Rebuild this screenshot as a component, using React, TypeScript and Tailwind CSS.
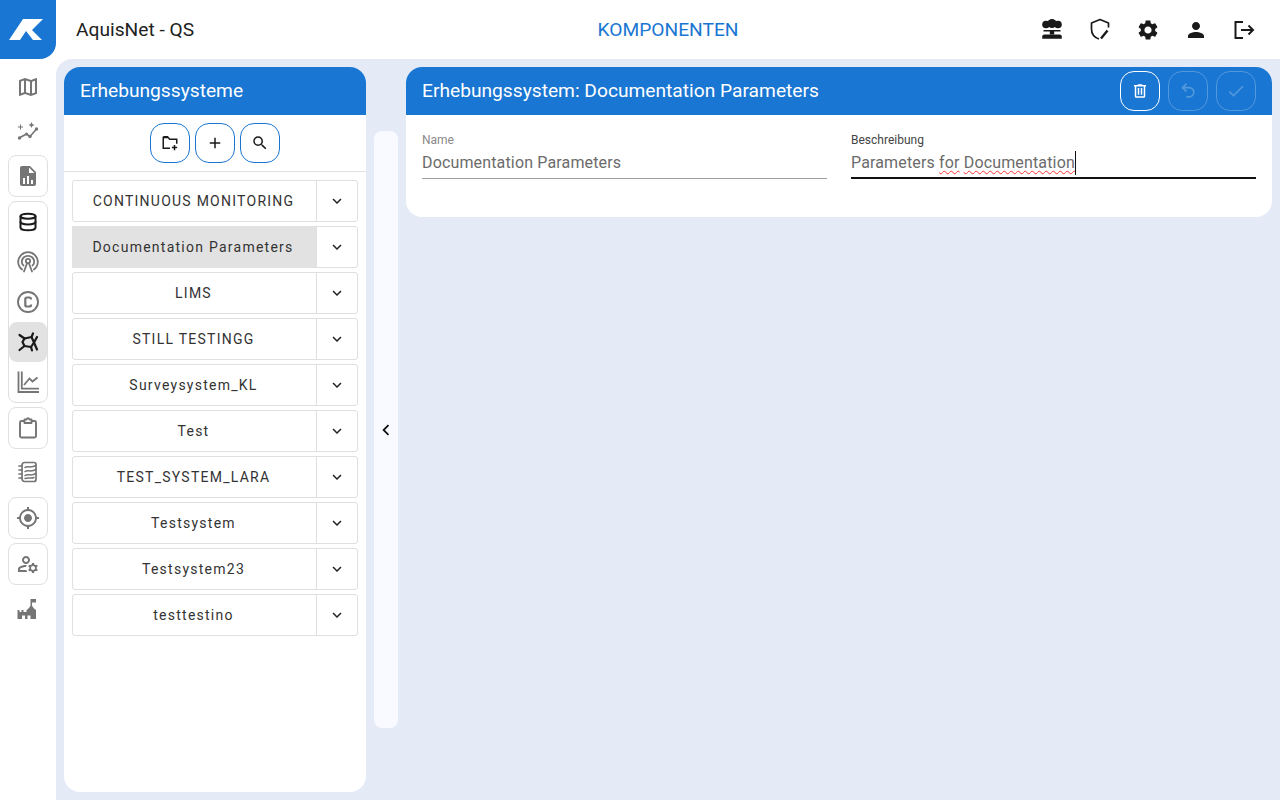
import React from "react";
import {
  MdOutlineMap,
  MdGpsFixed,
  MdOutlineManageAccounts,
  MdSettings,
  MdPerson,
  MdAdd,
  MdSearch,
  MdExpandMore,
  MdChevronLeft,
  MdCheck,
} from "react-icons/md";
import { Database } from "lucide-react";

const systems = [
  "CONTINUOUS MONITORING",
  "Documentation Parameters",
  "LIMS",
  "STILL TESTINGG",
  "Surveysystem_KL",
  "Test",
  "TEST_SYSTEM_LARA",
  "Testsystem",
  "Testsystem23",
  "testtestino",
];

const Logo = () => (
  <svg width="56" height="59" viewBox="0 0 56 59">
    <polygon points="23,19 43,19 32,30 42,40 33,40 26,31 20,40 9,40" fill="#fff" />
  </svg>
);

const SparkGraph = () => (
  <svg width="24" height="24" viewBox="0 0 24 24" fill="currentColor" stroke="none">
    <path d="M4 18.5L10.5 15L14 17.5L20.5 10" fill="none" stroke="currentColor" strokeWidth="1.6" />
    <circle cx="3.5" cy="19" r="1.7" />
    <circle cx="10.5" cy="15" r="1.5" />
    <circle cx="14" cy="17.5" r="1.7" />
    <circle cx="20.5" cy="10" r="1.7" />
    <path d="M4 5.5H5V7.5H7V8.5H5V10.5H4V8.5H2V7.5H4V5.5Z" />
    <path d="M15.5 3L16.4 5.1L18.5 6L16.4 6.9L15.5 9L14.6 6.9L12.5 6L14.6 5.1L15.5 3Z" />
  </svg>
);

const FileChart = () => (
  <svg width="24" height="24" viewBox="0 0 24 24" fill="currentColor">
    <path d="M13,9H18.5L13,3.5V9M6,2H14L20,8V20A2,2 0 0,1 18,22H6C4.89,22 4,21.1 4,20V4C4,2.89 4.89,2 6,2M7,20H9V14H7V20M11,20H13V12H11V20M15,20H17V16H15V20Z" />
  </svg>
);

const Antenna = () => (
  <svg width="24" height="24" viewBox="0 0 24 24" fill="none" stroke="currentColor" strokeWidth="1.8" strokeLinecap="round">
    <path d="M6 19.5C3.5 17.5 2.2 15 2.2 12C2.2 6.6 6.6 2.2 12 2.2C17.4 2.2 21.8 6.6 21.8 12C21.8 15 20.5 17.5 18 19.5" />
    <path d="M7.5 15.5C6.4 14.6 5.8 13.3 5.8 11.8C5.8 8.4 8.6 5.8 12 5.8C15.4 5.8 18.2 8.4 18.2 11.8C18.2 13.3 17.6 14.6 16.5 15.5" />
    <circle cx="12" cy="11" r="2.2" />
    <path d="M11 13.5L8 21.5M13 13.5L16 21.5" />
  </svg>
);

const CopyrightIcon = () => (
  <svg width="24" height="24" viewBox="0 0 24 24" fill="none" stroke="currentColor" strokeWidth="1.9">
    <circle cx="12" cy="12" r="10" />
    <path d="M15 9.5V9C15 8 14.3 7.5 13.3 7.5H11C10 7.5 9.3 8 9.3 9V15C9.3 16 10 16.5 11 16.5H13.3C14.3 16.5 15 16 15 15V14.5" strokeWidth="2.2" />
  </svg>
);

const Molecule = () => (
  <svg width="24" height="24" viewBox="0 0 24 24" fill="none" stroke="currentColor" strokeWidth="2.2" strokeLinecap="round" strokeLinejoin="round">
    <path d="M8.5 8.5L15.5 7L18 12.5L15 17L8.5 16L6.5 12Z" />
    <path d="M8.5 8.5L3.5 5M15.5 7L17 3.5M18 12.5L21 7M18 12.5L21 19.5M15 17L16 20.5M8.5 16L3.5 20" />
  </svg>
);

const DoubleAxisChart = () => (
  <svg width="24" height="24" viewBox="0 0 24 24" fill="none" stroke="currentColor" strokeWidth="1.8">
    <path d="M2.5 1.5V22H23" />
    <path d="M5.8 1.5V18.7H23" />
    <path d="M8 15L13.5 8.5L16.5 11.5L21.5 7.5" strokeWidth="1.8" />
  </svg>
);

const Clipboard = () => (
  <svg width="24" height="24" viewBox="0 0 24 24" fill="none" stroke="currentColor" strokeWidth="1.9" strokeLinejoin="round">
    <path d="M8.5 5H5.5C4.4 5 4 5.5 4 6.5V20C4 21 4.5 21.5 5.5 21.5H18.5C19.5 21.5 20 21 20 20V6.5C20 5.5 19.5 5 18.5 5H15.5" />
    <path d="M8.5 3.5H10.5C10.8 2.6 11.3 2.2 12 2.2C12.7 2.2 13.2 2.6 13.5 3.5H15.5V7H8.5V3.5Z" />
  </svg>
);

const Notebook = () => (
  <svg width="24" height="24" viewBox="0 0 24 24" fill="none" stroke="currentColor" strokeWidth="1.7" strokeLinecap="round" strokeLinejoin="round">
    <path d="M6 5.5C6 3.5 7 2.5 8.5 2.5H18C19.5 2.5 20 3.5 20 4.5V19.5C20 20.5 19.5 21.5 18 21.5H8.5C7 21.5 6 20.5 6 18.5V5.5Z" />
    <path d="M3 6H6M3 10H6M3 14H6M3 18H6" />
    <path d="M9 7.5C11 5.5 14 8.5 20 5.5M9 11.5C12 9.5 15 12.5 20 9.5M9 15.5C12 13.5 15 16.5 20 13.5M9 18.5C12 17 15 19 18 17.5" strokeWidth="1.5" />
  </svg>
);

const Castle = () => (
  <svg width="24" height="24" viewBox="0 0 24 24" fill="currentColor">
    <path d="M1.5 22V13H3.5V15H5.5V13H7.5V15H10.5V13C12 12 13.5 10.5 14.5 8.5V2H20V5.5H16V8.5C17 10.5 18.5 12 20 13V22H14.5V18.5H11.5V22H9V18.5H6V22H1.5Z" />
  </svg>
);

const MushroomCloud = () => (
  <svg width="24" height="24" viewBox="0 0 24 24" fill="currentColor">
    <circle cx="6" cy="6.5" r="3.8" />
    <circle cx="12" cy="5.5" r="4.5" />
    <circle cx="18" cy="6.5" r="3.8" />
    <path d="M3.5 12H20.5V13.6H14.2V16.5H9.8V13.6H3.5V12Z" />
    <path d="M4.5 16.5H19.5C21.2 16.5 21.8 17.5 21.8 19V20.8H2.2V19C2.2 17.5 2.8 16.5 4.5 16.5Z" />
  </svg>
);

const ShieldEdit = () => (
  <svg width="24" height="24" viewBox="0 0 24 24" fill="none" stroke="currentColor" strokeWidth="1.7" strokeLinejoin="round">
    <path d="M20.5 9.5V5L12 1.5L3.5 5V11C3.5 15.5 6.5 19.5 11 21" />
    <path d="M13 20.5L19.5 12.5" strokeWidth="2.4" />
  </svg>
);

const LogoutIcon = () => (
  <svg width="24" height="24" viewBox="0 0 24 24" fill="none" stroke="currentColor" strokeWidth="2">
    <path d="M11 4H3.5V20H11" />
    <path d="M9 12H21M16.5 7.5L21 12L16.5 16.5" />
  </svg>
);

const FolderPlus = () => (
  <svg width="18" height="18" viewBox="0 0 24 24" fill="none" stroke="currentColor" strokeWidth="2">
    <path d="M12 19H3V4.5H9.5L11.5 7H21V13" />
    <path d="M3 3.5H9.5" />
    <path d="M18 14.5V21.5M14.5 18H21.5" />
  </svg>
);

const TrashIcon = () => (
  <svg width="18" height="18" viewBox="0 0 24 24" fill="currentColor">
    <path d="M9,3V4H4V6H5V19A2,2 0 0,0 7,21H17A2,2 0 0,0 19,19V6H20V4H15V3H9M7,6H17V19H7V6M9,8V17H11V8H9M13,8V17H15V8H13Z" />
  </svg>
);

const UndoIcon = () => (
  <svg width="20" height="20" viewBox="0 0 24 24" fill="currentColor">
    <path d="M13.5,7A6.5,6.5 0 0,1 20,13.5A6.5,6.5 0 0,1 13.5,20H10V18H13.5C16,18 18,16 18,13.5C18,11 16,9 13.5,9H7.83L10.91,12.09L9.5,13.5L4,8L9.5,2.5L10.92,3.91L7.83,7H13.5Z" />
  </svg>
);

const NavItem = ({ children, dark, active }: { children: React.ReactNode; dark?: boolean; active?: boolean }) => (
  <div className={`w-full h-10 flex items-center justify-center rounded-lg ${dark ? "text-[#1a1a1a]" : "text-[#757575]"} ${active ? "bg-[#e2e2e2]" : ""}`}>
    {children}
  </div>
);

const NavBox = ({ children }: { children: React.ReactNode }) => (
  <div className="w-10 border border-[#dfdfdf] rounded-lg bg-white">{children}</div>
);

const Sidebar = () => (
  <div className="w-14 shrink-0 flex flex-col items-center gap-1 pt-2">
    <div className="w-10"><NavItem><MdOutlineMap size={24} /></NavItem></div>
    <div className="w-10"><NavItem><SparkGraph /></NavItem></div>
    <NavBox><NavItem><FileChart /></NavItem></NavBox>
    <NavBox>
      <NavItem dark><Database size={20} strokeWidth={2.4} /></NavItem>
      <NavItem><Antenna /></NavItem>
      <NavItem><CopyrightIcon /></NavItem>
      <NavItem dark active><Molecule /></NavItem>
      <NavItem><DoubleAxisChart /></NavItem>
    </NavBox>
    <NavBox><NavItem><Clipboard /></NavItem></NavBox>
    <div className="w-10 -mt-px mb-px"><NavItem><Notebook /></NavItem></div>
    <NavBox><NavItem><MdGpsFixed size={24} /></NavItem></NavBox>
    <NavBox><NavItem><MdOutlineManageAccounts size={24} /></NavItem></NavBox>
    <div className="w-10"><NavItem><Castle /></NavItem></div>
  </div>
);

const ToolButton = ({ children }: { children: React.ReactNode }) => (
  <button className="w-10 h-10 flex items-center justify-center rounded-[14px] border border-[#1976d2] text-[#1a1a1a]">
    {children}
  </button>
);

const HeaderButton = ({ children, disabled }: { children: React.ReactNode; disabled?: boolean }) => (
  <button className={`w-10 h-10 flex items-center justify-center rounded-[14px] border ${disabled ? "border-white/25 text-white/25" : "border-white text-white"}`}>
    {children}
  </button>
);

const SystemRow = ({ name, selected }: { name: string; selected: boolean }) => (
  <div className="h-[42px] flex border border-[#dfdfdf] rounded-[3px]">
    <div className={`flex-1 flex items-center justify-center pr-0.5 text-sm tracking-[1.25px] text-[#333] whitespace-nowrap ${selected ? "bg-[#e2e2e2] -m-px mr-0" : ""}`}>
      {name}
    </div>
    <div className="w-[41px] shrink-0 flex items-center justify-center border-l border-[#dfdfdf] text-[#212121]">
      <MdExpandMore size={18} />
    </div>
  </div>
);

export default function App() {
  return (
    <div className="h-screen w-full flex flex-col bg-white overflow-hidden font-['Roboto',sans-serif]">
      {/* Top bar */}
      <div className="h-[59px] shrink-0 flex">
        <div className="w-14 h-[59px] bg-[#1976d2] rounded-br-2xl"><Logo /></div>
        <div className="flex-1 grid grid-cols-3 items-center px-5">
          <div className="text-[19.2px] pt-0.5 text-[#212121]">AquisNet - QS</div>
          <div className="text-[19.2px] pt-0.5 text-center text-[#1976d2]">KOMPONENTEN</div>
          <div className="flex justify-end -mr-2 text-[#1a1a1a]">
            <div className="w-12 flex justify-center"><MushroomCloud /></div>
            <div className="w-12 flex justify-center"><ShieldEdit /></div>
            <div className="w-12 flex justify-center"><MdSettings size={24} /></div>
            <div className="w-12 flex justify-center"><MdPerson size={24} /></div>
            <div className="w-12 flex justify-center"><LogoutIcon /></div>
          </div>
        </div>
      </div>

      <div className="flex-1 flex min-h-0">
        <Sidebar />

        {/* Main */}
        <div className="flex-1 flex bg-[#e4eaf6] rounded-tl-2xl pl-2 pt-2 pr-2 pb-2 min-w-0">
          {/* List panel */}
          <div className="w-[302px] shrink-0 bg-white rounded-2xl overflow-hidden flex flex-col">
            <div className="h-12 shrink-0 bg-[#1976d2] text-white text-[19.2px] flex items-center px-4">Erhebungssysteme</div>
            <div className="h-[57px] shrink-0 flex items-center justify-center gap-[5px] border-b border-[#e0e0e0]">
              <ToolButton><FolderPlus /></ToolButton>
              <ToolButton><MdAdd size={18} /></ToolButton>
              <ToolButton><MdSearch size={18} /></ToolButton>
            </div>
            <div className="flex flex-col gap-1 px-2 pt-2">
              {systems.map((s) => (
                <SystemRow key={s} name={s} selected={s === "Documentation Parameters"} />
              ))}
            </div>
          </div>

          {/* Collapse strip */}
          <div className="w-6 shrink-0 mx-2 mt-16 mb-16 bg-[#f8faff] rounded-lg flex items-center justify-center text-[#111]">
            <MdChevronLeft size={22} className="shrink-0" />
          </div>

          {/* Detail panel */}
          <div className="flex-1 self-start h-[150px] bg-white rounded-2xl overflow-hidden min-w-0">
            <div className="h-12 bg-[#1976d2] text-white flex items-center justify-between pl-4 pr-4">
              <span className="text-[19.2px]">Erhebungssystem: Documentation Parameters</span>
              <div className="flex gap-2">
                <HeaderButton><TrashIcon /></HeaderButton>
                <HeaderButton disabled><UndoIcon /></HeaderButton>
                <HeaderButton disabled><MdCheck size={20} /></HeaderButton>
              </div>
            </div>
            <div className="grid grid-cols-2 gap-6 px-4 pt-[17px]">
              <div className="h-[47px] border-b border-[#9e9e9e]">
                <div className="text-xs leading-4 text-[#8a8a8a]">Name</div>
                <div className="text-base leading-6 mt-[3px] tracking-[0.15px] text-[#6b6b6b]">Documentation Parameters</div>
              </div>
              <div className="h-[47px] border-b-2 border-[#111]">
                <div className="text-xs leading-4 text-[#444]">Beschreibung</div>
                <div className="text-base leading-6 mt-[3px] tracking-[0.15px] text-[#6b6b6b] flex">
                  <span className="whitespace-pre">Parameters </span>
                  <span className="underline decoration-wavy decoration-[#f33] decoration-1 underline-offset-2">for</span>
                  <span className="whitespace-pre"> </span>
                  <span className="underline decoration-wavy decoration-[#f33] decoration-1 underline-offset-2 border-r border-[#111]">Documentation</span>
                </div>
              </div>
            </div>
          </div>
        </div>
      </div>
    </div>
  );
}
